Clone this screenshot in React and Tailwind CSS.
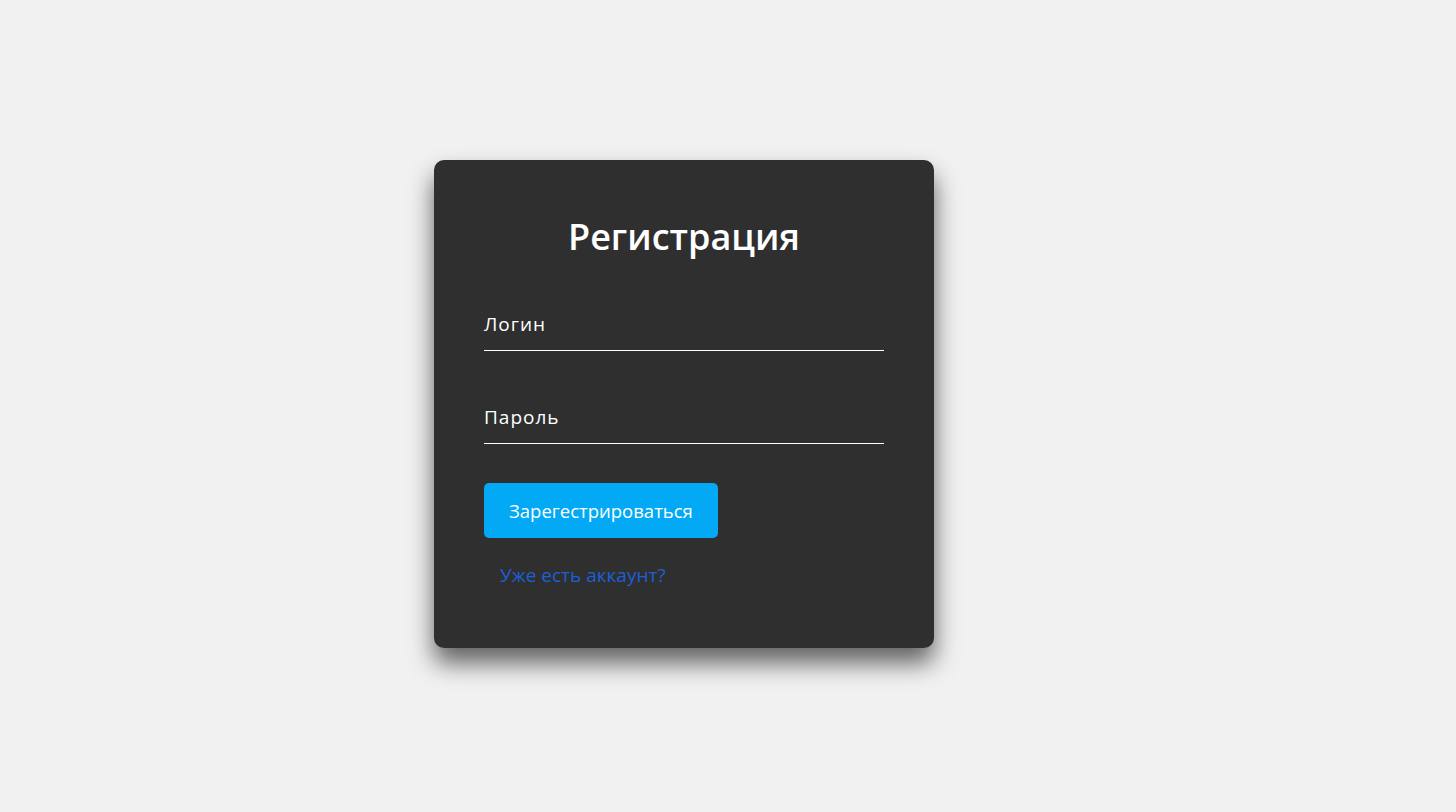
import React from 'react';

const Field = ({ label, className = '' }) => (
  <div className={`border-b border-white pb-[13px] ${className}`}>
    <label className="block text-[19px] leading-[26px] tracking-[1px] text-white">{label}</label>
  </div>
);

const App = () => {
  return (
    <div className="min-h-screen bg-[#f1f1f1] flex items-center justify-center font-['Open_Sans',sans-serif]">
      <div className="w-[500px] mr-[88px] mb-[4px] bg-[#2f2f2f] rounded-[10px] px-[50px] pt-[50px] pb-[60px] shadow-[0_15px_25px_rgba(0,0,0,0.6)]">
        <h2 className="text-center text-white text-[36px] leading-[54px] font-semibold">Регистрация</h2>

        <form onSubmit={(e) => e.preventDefault()}>
          <Field label="Логин" className="mt-[47px]" />
          <Field label="Пароль" className="mt-[53px]" />

          <button
            type="submit"
            className="mt-[39px] h-[55px] px-[25px] rounded-[5px] bg-[#03a9f4] text-white text-[18.5px]"
          >
            Зарегестрироваться
          </button>

          <div className="mt-[25px] pl-[16px]">
            <a href="#" className="text-[#1c5fd4] text-[19px] leading-[24px]">
              Уже есть аккаунт?
            </a>
          </div>
        </form>
      </div>
    </div>
  );
};

export default App;
